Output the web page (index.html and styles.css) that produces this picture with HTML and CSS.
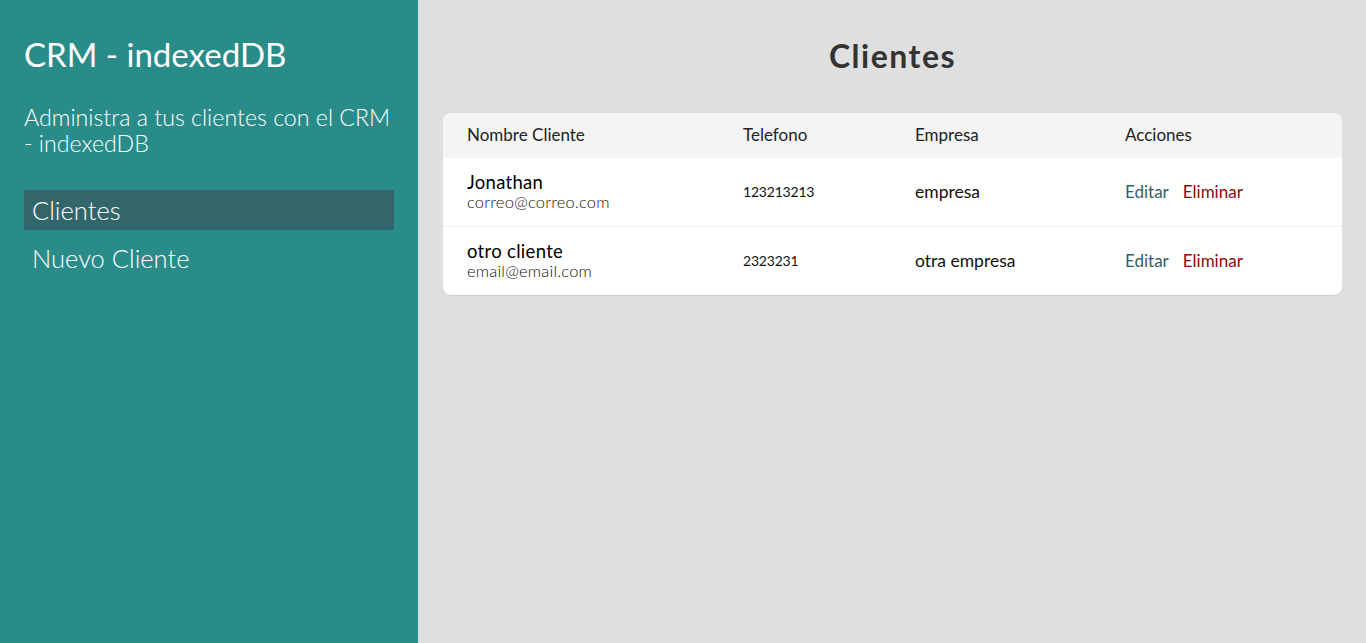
FILE: index.html
```html
<!DOCTYPE html>
<html lang="es">
<head>
<meta charset="utf-8">
<title>CRM - indexedDB</title>
<link rel="stylesheet" href="styles.css">
</head>
<body>
<div class="layout">
  <aside class="sidebar">
    <h1 class="brand">CRM - indexedDB</h1>
    <p class="tagline">Administra a tus clientes con el CRM - indexedDB</p>
    <nav class="nav">
      <a class="nav-link active" href="#">Clientes</a>
      <a class="nav-link" href="#">Nuevo Cliente</a>
    </nav>
  </aside>
  <main class="main">
    <h2 class="page-title">Clientes</h2>
    <div class="card">
      <table class="table">
        <thead>
          <tr>
            <th class="col-name">Nombre Cliente</th>
            <th class="col-phone">Telefono</th>
            <th class="col-company">Empresa</th>
            <th class="col-actions">Acciones</th>
          </tr>
        </thead>
        <tbody>
          <tr>
            <td><div class="client-name">Jonathan</div><div class="client-email">correo@correo.com</div></td>
            <td class="phone">123213213</td>
            <td>empresa</td>
            <td><a class="edit" href="#">Editar</a><a class="delete" href="#">Eliminar</a></td>
          </tr>
          <tr>
            <td><div class="client-name">otro cliente</div><div class="client-email">email@email.com</div></td>
            <td class="phone">2323231</td>
            <td>otra empresa</td>
            <td><a class="edit" href="#">Editar</a><a class="delete" href="#">Eliminar</a></td>
          </tr>
        </tbody>
      </table>
    </div>
  </main>
</div>
</body>
</html>
```
FILE: styles.css
```css
* { box-sizing: border-box; }
html, body { margin: 0; padding: 0; height: 100%; }
body {
  font-family: Lato, "Open Sans", sans-serif;
  background: #dfdfdf;
  color: #111;
}
.layout {
  display: grid;
  grid-template-columns: 418px 1fr;
  min-height: 100vh;
}
.sidebar {
  background: #2a8c89;
  color: #fff;
  padding: 32px 24px;
}
.brand {
  margin: 0;
  font-weight: 400;
  font-size: 33px;
  line-height: 44px;
}
.tagline {
  margin: 28px 0 0;
  font-size: 23.2px;
  font-weight: 300;
  line-height: 26px;
}
.nav {
  margin-top: 34px;
  display: flex;
  flex-direction: column;
  gap: 8px;
}
.nav-link {
  display: block;
  color: #fff;
  text-decoration: none;
  font-size: 25.5px;
  font-weight: 300;
  line-height: 40px;
  padding: 0 8px;
}
.nav-link.active { background: #32666b; }
.main {
  padding: 34px 24px 24px 25px;
}
.page-title {
  margin: 0 0 35px;
  text-align: center;
  font-size: 32px;
  font-weight: 700;
  letter-spacing: 1.5px;
  line-height: 44px;
  color: #333;
}
.card {
  background: #fff;
  border-radius: 8px;
  overflow: hidden;
  box-shadow: 0 1px 0 #cfcfcf;
}
.table {
  width: 100%;
  border-collapse: collapse;
}
.table th {
  background: #f4f4f4;
  text-align: left;
  font-weight: 400;
  font-size: 17px;
  color: #222;
  height: 44px;
  padding: 0 24px;
}
.col-name { width: 276px; }
.col-phone { width: 172px; }
.col-company { width: 210px; }
.table td {
  height: 69px;
  padding: 0 24px;
  font-size: 17.5px;
  color: #111;
  border-top: 1px solid #eee;
}
.table tbody tr:first-child td { border-top: 1px solid #f4f4f4; }
.client-name { font-size: 18.5px; line-height: 21px; color: #000; letter-spacing: 0.3px; }
.client-email { font-size: 16.5px; font-weight: 300; line-height: 19px; color: #111; letter-spacing: 0.2px; }
.table td.phone { font-size: 14px; letter-spacing: -0.2px; }
.edit, .delete { text-decoration: none; font-size: 17px; }
.edit { color: #2f6268; margin-right: 14px; }
.delete { color: #8b0a0a; }
```
